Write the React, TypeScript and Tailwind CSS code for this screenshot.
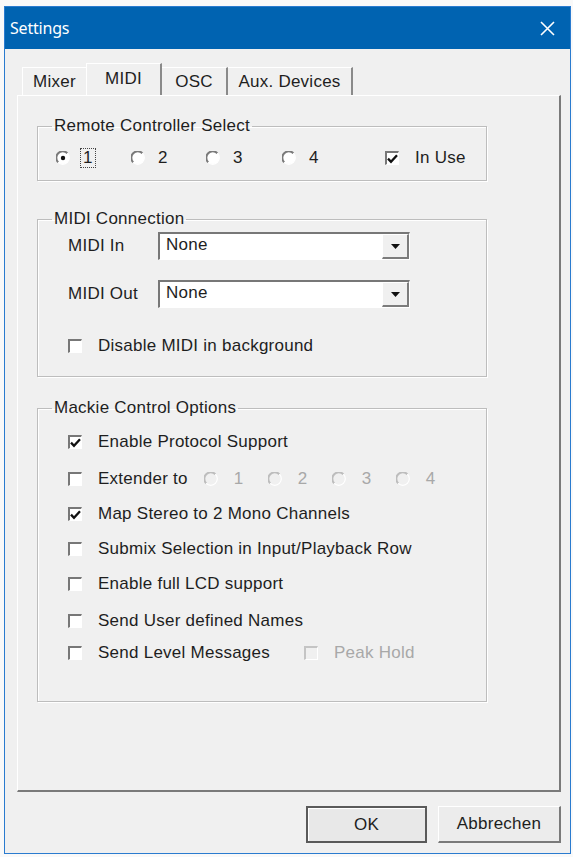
import React from "react";

const FONT = "font-['Liberation_Sans',Arial,sans-serif]";

const CheckBox: React.FC<{ checked?: boolean; disabled?: boolean }> = ({ checked, disabled }) => (
  <span
    className={`inline-flex items-center justify-center w-[14px] h-[14px] shrink-0 border-t-2 border-l-2 border-b border-r ${
      disabled ? "border-t-[#c4c4c4] border-l-[#c4c4c4] border-b-white border-r-white bg-[#f0f0f0]" : "border-t-[#777] border-l-[#777] border-b-white border-r-white bg-white"
    }`}
  >
    {checked && (
      <svg width="11" height="10" viewBox="0 0 11 10">
        <path d="M1 4.6 L4 7.8 L10 1.2" fill="none" stroke="#111" strokeWidth="2.3" />
      </svg>
    )}
  </span>
);

const Radio: React.FC<{ checked?: boolean; disabled?: boolean }> = ({ checked, disabled }) => (
  <svg width="14" height="14" viewBox="0 0 14 14" className="shrink-0">
    <circle cx="7" cy="7" r="6" fill={disabled ? "#f0f0f0" : "#fff"} />
    <path d="M2.2 11.4 A6 6 0 0 1 11.4 2.2" fill="none" stroke={disabled ? "#bdbdbd" : "#7a7a7a"} strokeWidth="2" />
    <path d="M11.4 2.2 A6 6 0 0 1 2.2 11.4" fill="none" stroke="#ffffff" strokeWidth="1.2" />
    {checked && <circle cx="7" cy="7" r="2.2" fill="#111" />}
  </svg>
);

const CheckRow: React.FC<{ label: string; checked?: boolean; className?: string; children?: React.ReactNode }> = ({
  label,
  checked,
  className = "",
  children,
}) => (
  <div className={`flex items-center h-[20px] ${className}`}>
    <CheckBox checked={checked} />
    <span className="ml-[16px]">{label}</span>
    {children}
  </div>
);

const Combo: React.FC<{ label: string; value: string; className?: string }> = ({ label, value, className = "" }) => (
  <div className={`flex items-center h-[28px] ${className}`}>
    <span className="w-[90px]">{label}</span>
    <div className="flex w-[252px] h-[28px] bg-white border-t-2 border-l-2 border-b border-r border-t-[#777] border-l-[#777] border-b-white border-r-white">
      <span className="flex-1 pl-[6px] leading-[22px]">{value}</span>
      <span className="flex items-center justify-center w-[27px] bg-[#f0f0f0] border-t border-l border-b-2 border-r-2 border-t-white border-l-white border-b-[#7c7c7c] border-r-[#7c7c7c]">
        <svg width="9" height="5" viewBox="0 0 9 5">
          <path d="M0 0 H9 L4.5 5 Z" fill="#111" />
        </svg>
      </span>
    </div>
  </div>
);

const Group: React.FC<{ title: string; className?: string; children: React.ReactNode }> = ({
  title,
  className = "",
  children,
}) => (
  <fieldset className={`w-[450px] border border-[#bdbdbd] shadow-[inset_1px_1px_0_#ffffff,1px_1px_0_#ffffff] ${className}`}>
    <legend className="ml-[14px] px-[2px] leading-[20px]">{title}</legend>
    {children}
  </fieldset>
);

export default function App() {
  return (
    <div className={`min-h-screen bg-[#f9f9f9] pt-[6px] pl-[4px] text-[17px] tracking-[0.25px] text-[#1e1e1e] ${FONT}`}>
      <div className="w-[567px] h-[848px] border border-[#2a7bcf] bg-[#f0f0f0] flex flex-col">
        {/* title bar */}
        <div className="h-[42px] bg-[#0063b1] flex items-center justify-between pl-[5px] pr-[15px]">
          <span className="text-white text-[16px] font-['Noto_Sans',sans-serif] tracking-[-0.2px]">Settings</span>
          <svg width="15" height="15" viewBox="0 0 15 15">
            <path d="M1 1 L14 14 M14 1 L1 14" stroke="#fff" strokeWidth="1.6" />
          </svg>
        </div>

        <div className="flex-1 flex flex-col pt-[14px] pl-[12px] pr-[9px]">
          {/* tabs */}
          <div className="flex items-end h-[32px] pl-[5px]">
            <div className="w-[64px] h-[28px] flex items-center justify-center border-t border-l border-white">Mixer</div>
            <div className="w-[76px] h-[33px] -mb-[1px] flex items-center justify-center bg-[#f0f0f0] border-t border-l border-white border-r-2 border-r-[#8a8a8a] pb-[2px]">
              MIDI
            </div>
            <div className="w-[66px] h-[28px] flex items-center justify-center border-t border-white border-r-2 border-r-[#8a8a8a]">OSC</div>
            <div className="w-[125px] h-[28px] flex items-center justify-center border-t border-white border-r-2 border-r-[#8a8a8a]">
              Aux. Devices
            </div>
          </div>

          {/* panel */}
          <div className="h-[697px] border-t border-l border-white border-r-2 border-b-2 border-r-[#7a7a7a] border-b-[#7a7a7a] pt-[20px] pl-[19px]">
            <Group title="Remote Controller Select">
              <div className="flex items-center h-[20px] mt-[12px] mb-[12px] pl-[18px]">
                <div className="flex items-center w-[75px]">
                  <Radio checked />
                  <span className="ml-[10px] px-[2px] border border-dotted border-[#444] leading-[18px]">1</span>
                </div>
                <div className="flex items-center w-[75px]">
                  <Radio />
                  <span className="ml-[13px]">2</span>
                </div>
                <div className="flex items-center w-[76px]">
                  <Radio />
                  <span className="ml-[13px]">3</span>
                </div>
                <div className="flex items-center w-[103px]">
                  <Radio />
                  <span className="ml-[13px]">4</span>
                </div>
                <CheckBox checked />
                <span className="ml-[16px]">In Use</span>
              </div>
            </Group>

            <Group title="MIDI Connection" className="mt-[28px]">
              <div className="pl-[30px] pt-[3px] pb-[20px]">
                <Combo label="MIDI In" value="None" />
                <Combo label="MIDI Out" value="None" className="mt-[20px]" />
                <CheckRow label="Disable MIDI in background" className="mt-[28px]" />
              </div>
            </Group>

            <Group title="Mackie Control Options" className="mt-[21px]">
              <div className="pl-[30px] pt-[14px] pb-[38px]">
                <CheckRow label="Enable Protocol Support" checked />
                <CheckRow label="Extender to" className="mt-[17px]">
                  <div className="flex items-center ml-[16px] text-[#a8a8a8]">
                    {["1", "2", "3", "4"].map((n) => (
                      <div key={n} className="flex items-center w-[64px]">
                        <Radio disabled />
                        <span className="ml-[16px]">{n}</span>
                      </div>
                    ))}
                  </div>
                </CheckRow>
                <CheckRow label="Map Stereo to 2 Mono Channels" checked className="mt-[15px]" />
                <CheckRow label="Submix Selection in Input/Playback Row" className="mt-[15px]" />
                <CheckRow label="Enable full LCD support" className="mt-[15px]" />
                <CheckRow label="Send User defined Names" className="mt-[17px]" />
                <CheckRow label="Send Level Messages" className="mt-[12px]">
                  <span className="ml-[34px] flex items-center text-[#a8a8a8]">
                    <CheckBox disabled />
                    <span className="ml-[16px]">Peak Hold</span>
                  </span>
                </CheckRow>
              </div>
            </Group>
          </div>

          {/* buttons */}
          <div className="flex justify-end gap-[11px] mt-[14px]">
            <button className="w-[121px] h-[37px] bg-[#e8e8e8] border-2 border-[#5a5a5a] shadow-[inset_1px_1px_0_#ffffff]">OK</button>
            <button className="w-[123px] h-[37px] bg-[#ececec] border-t border-l border-white border-b-2 border-r-2 border-b-[#7a7a7a] border-r-[#7a7a7a]">
              Abbrechen
            </button>
          </div>
        </div>
      </div>
    </div>
  );
}
